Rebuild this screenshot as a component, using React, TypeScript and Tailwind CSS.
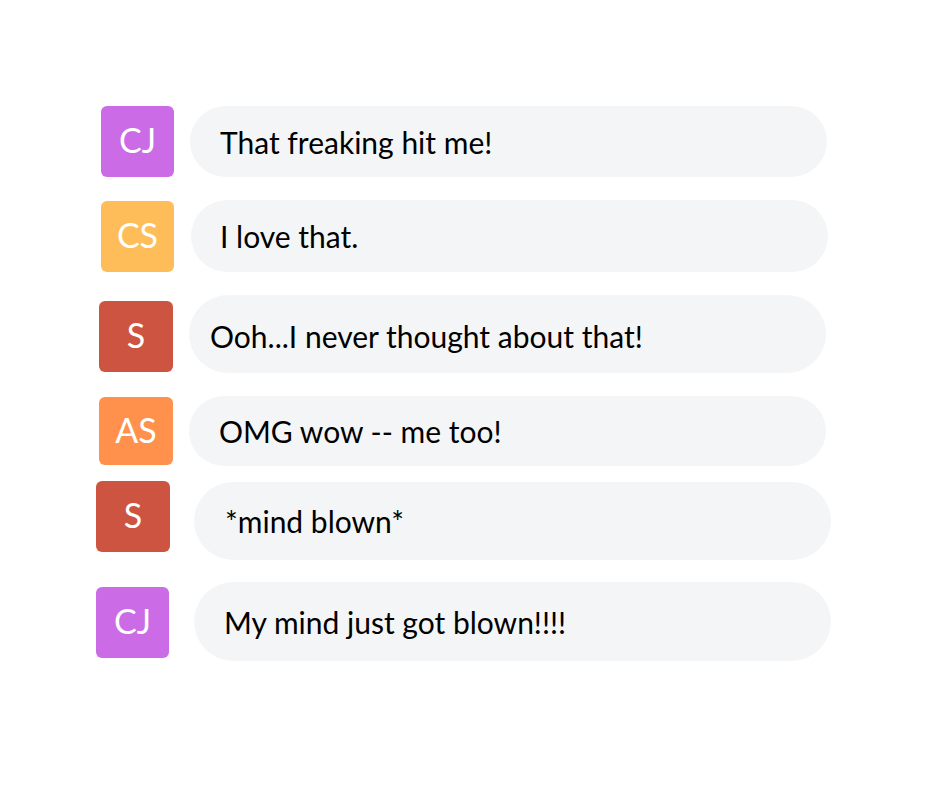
import React from 'react';

type Row = {
  initials: string;
  avatarColor: string;
  text: string;
  rowClass: string;
  avatarClass: string;
  bubbleClass: string;
};

const ROWS: Row[] = [
  {
    initials: 'CJ',
    avatarColor: 'bg-[#cb6ce6]',
    text: 'That freaking hit me!',
    rowClass: 'mt-[106px] ml-[101px] gap-[16px]',
    avatarClass: 'w-[73px] h-[71px]',
    bubbleClass: 'h-[71px] pl-[30px]',
  },
  {
    initials: 'CS',
    avatarColor: 'bg-[#ffbd59]',
    text: 'I love that.',
    rowClass: 'mt-[23px] ml-[101px] gap-[17px]',
    avatarClass: 'mt-[1px] w-[73px] h-[71px]',
    bubbleClass: 'h-[72px] pl-[29px]',
  },
  {
    initials: 'S',
    avatarColor: 'bg-[#cc5440]',
    text: 'Ooh...I never thought about that!',
    rowClass: 'mt-[23px] ml-[99px] gap-[16px]',
    avatarClass: 'mt-[6px] w-[74px] h-[71px]',
    bubbleClass: 'h-[78px] pl-[21px] pt-[3px]',
  },
  {
    initials: 'AS',
    avatarColor: 'bg-[#ff914d]',
    text: 'OMG wow -- me too!',
    rowClass: 'mt-[23px] ml-[99px] gap-[16px]',
    avatarClass: 'mt-[1px] w-[74px] h-[68px]',
    bubbleClass: 'h-[70px] pl-[30px]',
  },
  {
    initials: 'S',
    avatarColor: 'bg-[#cc5440]',
    text: '*mind blown*',
    rowClass: 'mt-[15px] ml-[96px] gap-[24px]',
    avatarClass: 'w-[74px] h-[71px]',
    bubbleClass: 'mt-[1px] h-[78px] pl-[31px]',
  },
  {
    initials: 'CJ',
    avatarColor: 'bg-[#cb6ce6]',
    text: 'My mind just got blown!!!!',
    rowClass: 'mt-[22px] ml-[96px] gap-[25px]',
    avatarClass: 'mt-[5px] w-[73px] h-[71px]',
    bubbleClass: 'h-[79px] pl-[30px]',
  },
];

export default function App() {
  return (
    <div className="w-[940px] h-[788px] bg-white font-['Lato','Liberation_Sans',sans-serif] flex flex-col">
      {ROWS.map((r, i) => (
        <div key={i} className={`flex items-start ${r.rowClass}`}>
          <div
            className={`${r.avatarClass} ${r.avatarColor} rounded-[6px] flex items-center justify-center pb-[3px] text-white text-[34px] leading-none shrink-0`}
          >
            {r.initials}
          </div>
          <div
            className={`${r.bubbleClass} w-[637px] bg-[#f4f5f7] rounded-full flex items-center text-[30px] text-black leading-none`}
          >
            {r.text}
          </div>
        </div>
      ))}
    </div>
  );
}
